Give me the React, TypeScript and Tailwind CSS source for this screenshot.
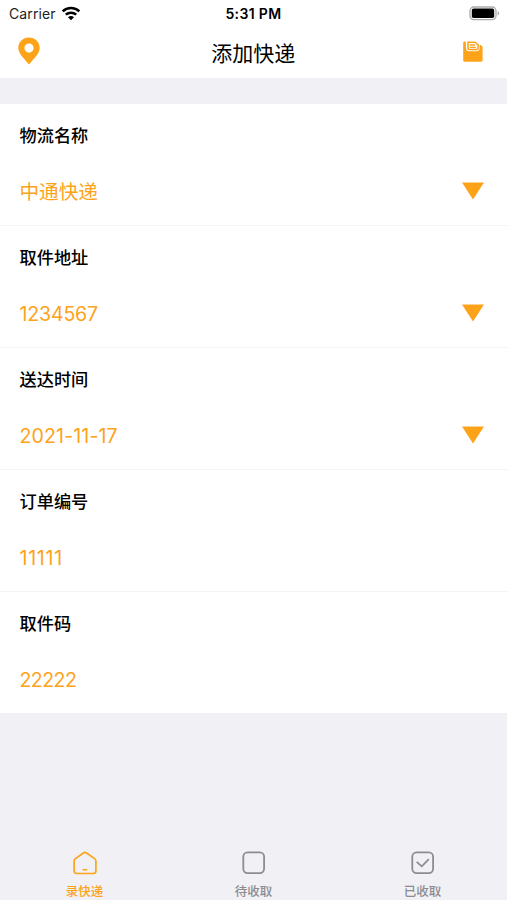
import React, { useState } from 'react';

interface Field {
    label: string;
    value: string;
    tracking?: string;
    select?: boolean;
}

const FIELDS: Field[] = [
    { label: '物流名称', value: '中通快递', select: true },
    { label: '取件地址', value: '1234567', tracking: 'tracking-[-0.2px]', select: true },
    { label: '送达时间', value: '2021-11-17', tracking: 'tracking-[0.1px]', select: true },
    { label: '订单编号', value: '11111', tracking: 'tracking-[0.7px]' },
    { label: '取件码', value: '22222', tracking: 'tracking-[-0.6px]' },
];

const TABS = [
    { title: '录快递', Icon: HomeIcon },
    { title: '待收取', Icon: BoxIcon },
    { title: '已收取', Icon: CheckIcon },
];

function WifiIcon() {
    return (
        <svg width="20" height="15" viewBox="0 0 20 15" fill="none" stroke="#000" strokeWidth="2.5">
            <path d="M1.7 5.4C6.3 .9 13.7 .9 18.3 5.4" />
            <path d="M4.8 8.7C7.7 6 12.3 6 15.2 8.7" />
            <path d="M10 14.2L7 11.2C8.7 9.7 11.3 9.7 13 11.2Z" fill="#000" stroke="none" />
        </svg>
    );
}

function BatteryIcon() {
    return (
        <svg width="31" height="15" viewBox="0 0 31 15">
            <rect x="1" y="1" width="26" height="12.6" rx="3.8" fill="#fff" stroke="#aaa" strokeWidth="1.3" />
            <rect x="2.8" y="2.6" width="22.4" height="9.4" rx="1.8" fill="#000" />
            <path d="M28.6 5.2C30.7 5.9 30.7 8.7 28.6 9.4Z" fill="#aaa" />
        </svg>
    );
}

function PinIcon() {
    return (
        <svg width="22" height="28" viewBox="0 0 22 28">
            <path
                fillRule="evenodd"
                fill="#fda31a"
                d="M11 .6C5 .6 .3 5.2 .3 11.1C.3 16.2 4.8 20.3 11 27.6C17.2 20.3 21.7 16.2 21.7 11.1C21.7 5.2 17 .6 11 .6ZM11 6.5A4.6 4.6 0 1 1 11 15.7A4.6 4.6 0 1 1 11 6.5Z"
            />
        </svg>
    );
}

function SaveIcon() {
    return (
        <svg width="20" height="22" viewBox="0 0 20 22">
            <path
                fill="#fda31a"
                d="M1.4 .5H1.9Q2.9 .5 2.9 1.5V7Q2.9 10.2 6 10.2H13.2Q16.6 10.2 16.6 7V3.5L18 4.2Q19.6 5 19.6 6.3V19.2Q19.6 20.8 18 20.8H2Q.2 20.8 .2 19.2V1.7Q.2 .5 1.4 .5Z"
            />
            <path
                fill="none"
                stroke="#fda31a"
                strokeWidth="1.6"
                d="M5 1.2H12L15.1 4V7.2Q15.1 8.5 13.6 8.5H6.4Q5 8.5 5 7.2Z"
            />
            <path stroke="#fda31a" strokeWidth="1.3" d="M6.8 4H12M6.8 6.3H13" />
        </svg>
    );
}

function HomeIcon() {
    return (
        <svg width="26" height="26" viewBox="0 0 26 26" fill="none" stroke="currentColor" strokeWidth="1.7" strokeLinejoin="round" strokeLinecap="round">
            <path d="M11.4 3Q13 1.9 14.6 3L22.6 8.6Q23.9 9.6 23.9 11.1V20.8Q23.9 23.5 21.2 23.5H4.8Q2.1 23.5 2.1 20.8V11.1Q2.1 9.6 3.4 8.6Z" />
            <path d="M11.2 19.7H14.8" strokeWidth="1.5" />
        </svg>
    );
}

function BoxIcon() {
    return (
        <svg width="26" height="26" viewBox="0 0 26 26" fill="none" stroke="currentColor" strokeWidth="1.8">
            <rect x="2.3" y="2.3" width="20.8" height="20.8" rx="4.3" />
        </svg>
    );
}

function CheckIcon() {
    return (
        <svg width="26" height="26" viewBox="0 0 26 26" fill="none" stroke="currentColor" strokeWidth="1.8">
            <rect x="2.3" y="2.3" width="20.8" height="20.8" rx="4.3" />
            <path d="M6.7 11.8L11.8 16.3L18.8 9.2" />
        </svg>
    );
}

function FieldRow({ label, value, tracking = 'tracking-normal', select }: Field) {
    return (
        <div className="h-[122px] border-b border-[#f3f3f4] bg-white pl-[19.5px] pr-[23px] pt-5 last:h-[121px] last:border-b-0">
            <div className="text-[17.2px] font-medium leading-6 text-black">{label}</div>
            <div className="mt-[30px] flex h-7 items-center justify-between">
                <span className={`text-[19.6px] leading-7 text-[#fda31a] ${tracking}`}>{value}</span>
                {select && (
                    <svg className="mb-[2px]" width="22" height="18" viewBox="0 0 22 18">
                        <path d="M0 .5H22L11 17.5Z" fill="#fda31a" />
                    </svg>
                )}
            </div>
        </div>
    );
}

export default function App() {
    const [active, setActive] = useState(0);

    return (
        <div className="flex h-[900px] w-full flex-col bg-[#f0f0f5] font-['Inter','Noto_Sans_CJK_SC',sans-serif]">
            <header className="h-[78px] bg-white">
                {/* Status bar */}
                <div className="grid h-[27px] grid-cols-3 items-center pl-[7px] pr-[7px] text-[14px] text-black">
                    <div className="flex items-center gap-[5px] pl-[2px]">
                        <span className="tracking-[0.1px] text-[#222]">Carrier</span>
                        <WifiIcon />
                    </div>
                    <span className="text-center text-[14px] font-semibold tracking-[0.35px]">5:31 PM</span>
                    <div className="flex justify-end">
                        <BatteryIcon />
                    </div>
                </div>

                {/* Title bar */}
                <div className="flex h-[51px] items-center justify-between pl-[17.5px] pr-6">
                    <button className="mt-[-3px]">
                        <PinIcon />
                    </button>
                    <h1 className="ml-1 mt-[2px] text-[21px] leading-7 text-black">添加快递</h1>
                    <button className="mt-[-2px]">
                        <SaveIcon />
                    </button>
                </div>
            </header>

            <main className="mt-[26px]">
                {FIELDS.map((field) => (
                    <FieldRow key={field.label} {...field} />
                ))}
            </main>

            {/* Tab bar */}
            <nav className="mt-auto grid h-[50px] grid-cols-3">
                {TABS.map(({ title, Icon }, idx) => (
                    <button
                        key={title}
                        onClick={() => setActive(idx)}
                        className={`flex flex-col items-center ${active === idx ? 'text-[#fda31a]' : 'text-[#8c8c91]'}`}
                    >
                        <Icon />
                        <span className="mt-[7px] text-[12.5px] font-medium leading-[18px]">{title}</span>
                    </button>
                ))}
            </nav>
        </div>
    );
}
